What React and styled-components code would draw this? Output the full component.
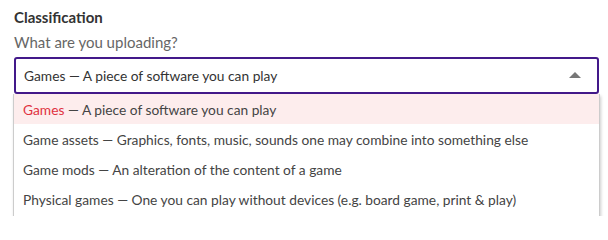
import styled, { createGlobalStyle } from "styled-components";

const GlobalStyle = createGlobalStyle`
  body {
    margin: 0;
    background: #fff;
    font-family: Lato, "Open Sans", sans-serif;
  }
`;

const options = [
  { name: "Games", desc: "A piece of software you can play" },
  { name: "Game assets", desc: "Graphics, fonts, music, sounds one may combine into something else" },
  { name: "Game mods", desc: "An alteration of the content of a game" },
  { name: "Physical games", desc: "One you can play without devices (e.g. board game, print & play)" },
];

export default function App() {
  return (
    <>
      <GlobalStyle />
      <Field>
        <Label>Classification</Label>
        <Hint>What are you uploading?</Hint>
        <SelectBox>
          <span>Games — A piece of software you can play</span>
          <Caret />
        </SelectBox>
        <Menu>
          {options.map((o, i) => (
            <Option key={o.name} $active={i === 0}>
              <OptName $active={i === 0}>{o.name}</OptName> — {o.desc}
            </Option>
          ))}
        </Menu>
      </Field>
    </>
  );
}

const Field = styled.div`
  padding: 7px 9px 0 14px;
  display: flex;
  flex-direction: column;
  height: 216px;
  box-sizing: border-box;
  overflow: hidden;
`;

const Label = styled.div`
  font-size: 15px;
  font-weight: 700;
  color: #333;
  line-height: 20px;
`;

const Hint = styled.div`
  font-size: 15px;
  color: #666;
  line-height: 22px;
  margin-top: 4px;
  margin-bottom: 4px;
`;

const SelectBox = styled.div`
  height: 37px;
  flex-shrink: 0;
  box-sizing: border-box;
  border: 2px solid #43198a;
  border-radius: 3px;
  display: flex;
  align-items: center;
  justify-content: space-between;
  padding: 0 16px 0 8px;
  font-size: 13.75px;
  color: #333;
`;

const Caret = styled.span`
  width: 0;
  height: 0;
  border-left: 6px solid transparent;
  border-right: 6px solid transparent;
  border-bottom: 6px solid #777;
  margin-top: -2px;
`;

const Menu = styled.div`
  flex-shrink: 0;
  margin: 0 -1px;
  padding-bottom: 8px;
  background: #fff;
  border: 1px solid #ccc;
  border-top: none;
  box-shadow: 1px 2px 3px rgba(0, 0, 0, 0.2);
`;

const Option = styled.div`
  height: 30px;
  display: flex;
  align-items: center;
  padding-left: 9px;
  font-size: 13.75px;
  color: #444;
  background: ${(p) => (p.$active ? "#fdeded" : "#fff")};
  white-space: pre;
`;

const OptName = styled.span`
  color: ${(p) => (p.$active ? "#e0323f" : "inherit")};
`;
